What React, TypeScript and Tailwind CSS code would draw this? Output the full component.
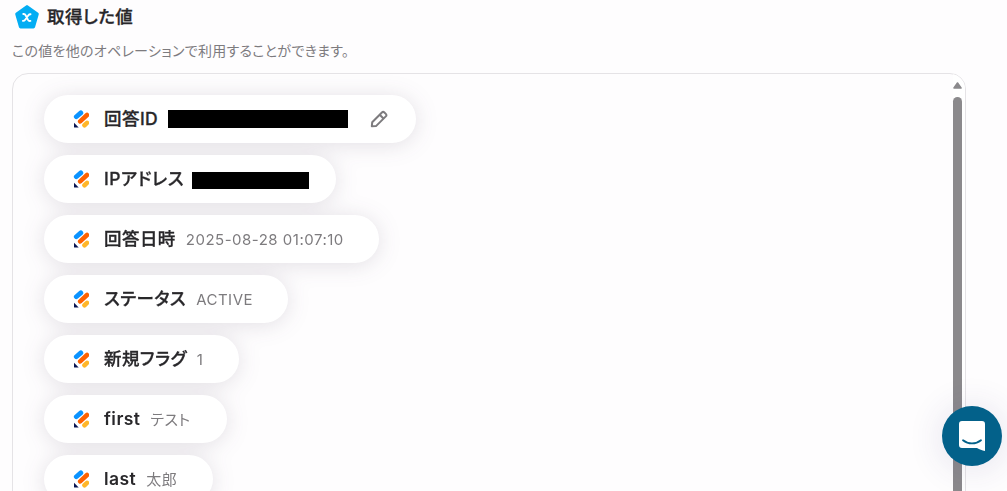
import { ReactNode } from "react";

type Field = {
  label: string;
  value?: string;
  width: string;
  latin?: boolean;
  masked?: string;
  editable?: boolean;
};

const fields: Field[] = [
  { label: "回答ID", width: "w-[372px]", masked: "ml-[10px] w-[180px] h-[18px]", editable: true },
  { label: "IPアドレス", width: "w-[292px]", masked: "ml-[8px] mt-[2px] w-[117px] h-[17px]" },
  { label: "回答日時", value: "2025-08-28 01:07:10", width: "w-[335px]" },
  { label: "ステータス", value: "ACTIVE", width: "w-[244px]" },
  { label: "新規フラグ", value: "1", width: "w-[195px]" },
  { label: "first", value: "テスト", width: "w-[183px]", latin: true },
  { label: "last", value: "太郎", width: "w-[169px]", latin: true },
];

const FormIcon = () => (
  <svg width="16" height="18" viewBox="0 0 16 18" className="shrink-0">
    <path d="M3.3 6.8 7.8 2.9" stroke="#0a93ff" strokeWidth="4.8" strokeLinecap="round" />
    <path d="M7.2 11.4 14 5" stroke="#ff6100" strokeWidth="4.6" strokeLinecap="round" />
    <path d="M11.5 15.2 14 12.9" stroke="#ffb629" strokeWidth="4.6" strokeLinecap="round" />
    <path d="M1 12.7 5.7 17.6H1.7a.7.7 0 0 1-.7-.7Z" fill="#0a1551" />
  </svg>
);

const PencilIcon = () => (
  <svg
    width="18"
    height="18"
    viewBox="0 0 18 18"
    fill="none"
    stroke="#7d7b7e"
    strokeWidth="2"
    strokeLinejoin="round"
    className="ml-[22px] shrink-0"
  >
    <path d="M1.8 16.3 2.2 12.3 11.9 2.5a1.8 1.8 0 0 1 2.5 0l1.4 1.4a1.8 1.8 0 0 1 0 2.5L6 16.1Z" />
    <path d="m9.7 4.7 4 4" />
  </svg>
);

const Pill = ({ width, children }: { width: string; children: ReactNode }) => (
  <div className={`flex h-12 shrink-0 items-center rounded-full bg-white pl-[29px] ${width}`}>
    {children}
  </div>
);

const App = () => {
  return (
    <div className="relative h-[491px] w-[1007px] overflow-hidden bg-[#fefdfe] font-['Inter','Noto_Sans_CJK_JP',sans-serif] text-[#28272a] [font-feature-settings:'palt']">
      <header className="flex h-[34px] items-center pl-[14px]">
        <svg width="26" height="26" viewBox="0 0 26 26" className="shrink-0">
          <path
            d="M13 2.7 23.2 10 19.5 22.9H6.5L2.8 10Z"
            fill="#03adf3"
            stroke="#03adf3"
            strokeWidth="3.2"
            strokeLinejoin="round"
          />
          <path
            d="M9.3 10c1.3-.2 1.900.3 2.400 1.300l2.300 4.600c.5.9 1.200 1.300 2.400 1M16.500 10.200c-.8-.1-1.500.3-2.100 1.100l-3.200 4.400c-.6.8-1.300 1.300-2.300 1.200"
            fill="none"
            stroke="#fff"
            strokeWidth="1.9"
            strokeLinecap="round"
          />
        </svg>
        <h1 className="ml-[7px] text-[17.5px] font-medium leading-6 tracking-[0.45px] whitespace-nowrap [-webkit-text-stroke:0.3px]">
          取得した値
        </h1>
      </header>
      <p className="mt-[7px] h-5 pl-[12px] text-[14px] leading-5 tracking-[0.3px] whitespace-nowrap text-[#7d7b7e]">
        この値を他のオペレーションで利用することができます。
      </p>

      <section className="ml-[12px] mt-[12px] flex h-[520px] w-[954px] justify-between overflow-hidden rounded-[16px] border border-[#e5e3e6]">
        <div className="flex flex-col gap-3 pl-[31px] pt-[21px] drop-shadow-[0_2px_11px_rgba(60,40,70,0.14)]">
          {fields.map((field) => (
            <Pill key={field.label} width={field.width}>
              <FormIcon />
              <span
                className={`ml-[15px] text-[17.5px] leading-6 tracking-[0.45px] whitespace-nowrap ${
                  field.latin ? "font-semibold" : "font-medium [-webkit-text-stroke:0.3px]"
                }`}
              >
                {field.label}
              </span>
              {field.masked && <span className={`shrink-0 bg-black ${field.masked}`} />}
              {field.value && (
                <span className="ml-[10px] mt-[2px] text-[15px] leading-6 tracking-[0.5px] whitespace-nowrap text-[#7d7b7e]">
                  {field.value}
                </span>
              )}
              {field.editable && <PencilIcon />}
            </Pill>
          ))}
        </div>
        <div className="flex w-[12px] shrink-0 flex-col items-start bg-white">
          <svg width="9" height="7" viewBox="0 0 9 7" className="mt-[8px] shrink-0">
            <path d="M4.5 1 8 6H1Z" fill="#8b898c" stroke="#8b898c" strokeWidth="1.6" strokeLinejoin="round" />
          </svg>
          <div className="mt-[8px] w-[9px] flex-1 rounded-t-full bg-[#8b898c]" />
        </div>
      </section>

      <button
        aria-label="チャット"
        className="absolute left-[942px] top-[406px] flex h-[60px] w-[60px] items-center justify-center rounded-full bg-[#03618a] shadow-[0_2px_36px_rgba(60,50,120,0.14)]"
      >
        <svg width="28" height="32" viewBox="0 0 28 32">
          <path
            d="M4 1h20a3 3 0 0 1 3 3v27c-3-.6-5.500-1.700-8-3H4a3 3 0 0 1-3-3V4a3 3 0 0 1 3-3Z"
            fill="#fff"
          />
          <path d="M5 20.200c5.400 4.300 12.600 4.300 18 0" fill="none" stroke="#03618a" strokeWidth="1.8" strokeLinecap="round" />
        </svg>
      </button>
    </div>
  );
};

export default App;
